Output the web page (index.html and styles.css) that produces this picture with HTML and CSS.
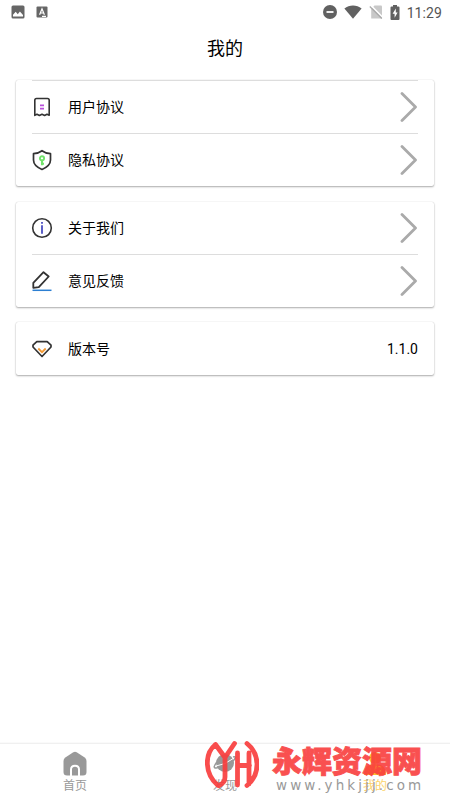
FILE: index.html
```html
<!DOCTYPE html>
<html lang="zh-CN">
<head>
<meta charset="utf-8">
<title>我的</title>
<link rel="stylesheet" href="styles.css">
</head>
<body>
<div class="app">
  <div class="status">
    <div class="status-group left">
      <svg width="14" height="14" viewBox="0 0 14 14"><rect x=".5" y=".5" width="13" height="13" rx="1.5" fill="#666"/><path d="M2 11.5V9.8l2.7-3 2.1 2.4 2.1-2.6 3.1 3.5v1.4z" fill="#fff"/></svg>
      <svg width="12" height="12" viewBox="0 0 12 12"><rect x=".5" y=".5" width="11" height="11" rx="1" fill="#666"/><path d="M3.6 8.8 6 2.8l2.4 6M4.400 7h3.200M6 10.400h4" fill="none" stroke="#fff" stroke-width="1.200"/></svg>
    </div>
    <div class="status-group right">
      <svg width="14" height="14" viewBox="0 0 14 14"><circle cx="7" cy="7" r="7" fill="#616161"/><path d="M3.500 7h7" stroke="#fff" stroke-width="1.800"/></svg>
      <svg width="18" height="14" viewBox="0 0 18 14"><path d="M.4 3.400C5.200-.5 12.800-.5 17.600 3.400L9 13.800z" fill="#616161"/></svg>
      <svg width="14" height="14" viewBox="0 0 14 14"><path d="M5.500.5H12q1 0 1 1v12H2.200V4z" fill="#c8c8c8"/><path d="m1.500 0 13 13" stroke="#fff" stroke-width="1.500"/><path d="m.8 1.500 12 12" stroke="#aaa" stroke-width="1.200"/></svg>
      <svg width="10" height="15" viewBox="0 0 10 15"><path d="M3 0h4v1.500h1.500q1 0 1 1V14q0 1-1 1h-7q-1 0-1-1V2.500q0-1 1-1H3z" fill="#616161"/><path d="M5.800 3.500 2.600 8.700h2v4l3-5.300H5.800z" fill="#fff"/></svg>
      <span class="clock">11:29</span>
    </div>
  </div>
  <h1 class="title">我的</h1>
  <main class="cards">
    <section class="card">
      <div class="row ruled">
        <svg class="icon" viewBox="0 0 22 22" fill="none"><path d="M3.800 19.300V4.200q0-1.700 1.700-1.700h11q1.700 0 1.700 1.700v15.100l-2.200-1-2.400 1.200L11 18.300l-2.600 1.200L6 18.300z" stroke="#333" stroke-width="1.600" stroke-linejoin="round"/><path d="M9 9.300h4M9 12.700h4" stroke="#b950dc" stroke-width="1.700"/></svg>
        <span class="label">用户协议</span>
        <svg class="chevron" viewBox="0 0 18 30"><path d="m2 1.500 13.500 13.500L2 28.500"/></svg>
      </div>
      <div class="row ruled">
        <svg class="icon" viewBox="0 0 22 22" fill="none"><path d="M11 1.700Q14.500 4.300 19.500 4.700V11q0 5.800-8.500 9.500Q2.500 16.800 2.500 11V4.700Q7.500 4.300 11 1.700z" stroke="#333" stroke-width="1.700" stroke-linejoin="round"/><circle cx="11" cy="9.300" r="2.100" stroke="#72e36c" stroke-width="1.900"/><path d="M11 11v5.200M11 14.700h2" stroke="#72e36c" stroke-width="2.100"/></svg>
        <span class="label">隐私协议</span>
        <svg class="chevron" viewBox="0 0 18 30"><path d="m2 1.500 13.500 13.500L2 28.500"/></svg>
      </div>
    </section>
    <section class="card compact">
      <div class="row">
        <svg class="icon" viewBox="0 0 22 22" fill="none"><circle cx="11" cy="11" r="9.300" stroke="#333" stroke-width="1.600"/><path d="M11 8.300v8.500M11 5v1.700" stroke="#5b5fc7" stroke-width="2"/></svg>
        <span class="label">关于我们</span>
        <svg class="chevron" viewBox="0 0 18 30"><path d="m2 1.500 13.500 13.500L2 28.500"/></svg>
      </div>
      <div class="row ruled">
        <svg class="icon" viewBox="0 0 22 22" fill="none"><path d="M2.300 17.800v-5L12.500 2.200l5.200 4.300L7.800 17.200z" stroke="#333" stroke-width="1.800" stroke-linejoin="round"/><path d="M1.500 20.300h19" stroke="#2c7fd2" stroke-width="1.500"/></svg>
        <span class="label">意见反馈</span>
        <svg class="chevron" viewBox="0 0 18 30"><path d="m2 1.500 13.500 13.500L2 28.500"/></svg>
      </div>
    </section>
    <section class="card compact">
      <div class="row">
        <svg class="icon" viewBox="0 0 22 22" fill="none"><path d="M5.800 3.700h10.400l3.800 3.500v1.800L11 18.500 2 9V7.200z" stroke="#333" stroke-width="1.700" stroke-linejoin="round"/><path d="m7.300 10.500 3.700 3.700 3.700-3.700" stroke="#f39a35" stroke-width="1.800"/></svg>
        <span class="label">版本号</span>
        <span class="version">1.1.0</span>
      </div>
    </section>
  </main>
  <nav class="tabs">
    <div class="tab">
      <svg width="24" height="25" viewBox="0 0 24 25"><path d="M10.300 1.200q1.700-1.100 3.400 0l8 5.300q1.800 1.300 1.800 3.500v11q0 3.500-3.500 3.500H4Q.5 24.500.5 21V10q0-2.200 1.800-3.500z" fill="#999"/><path d="M8 25v-6.500q0-3.700 4-3.700t4 3.700V25" fill="none" stroke="#fff" stroke-width="2"/></svg>
      <span>首页</span>
    </div>
    <div class="tab">
      <svg width="24" height="25" viewBox="0 0 24 25"><circle cx="12" cy="12" r="9" fill="#999"/><path d="M4 11Q-1 17 3 17q10-1 18-8 3-4-1-3" fill="none" stroke="#999" stroke-width="1.500"/><path d="M3 15q9-1 18-8" fill="none" stroke="#fff" stroke-width="1"/></svg>
      <span>发现</span>
    </div>
    <div class="tab active">
      <svg width="24" height="25" viewBox="0 0 24 25"><circle cx="12" cy="7" r="6" fill="#fbc02d"/><path d="M1 24q0-11 11-11t11 11z" fill="#fbc02d"/></svg>
      <span>我的</span>
    </div>
  </nav>
  <div class="watermark">
    <svg class="mark" viewBox="0 0 54 49" fill="none"><path d="M10.500 4.500C-1 14-.5 34 13 45.500M10.500 4.500 20 17.500 29.500 3.500M20 17.500V37q0 6-6 8.500M32.500 13v32M32.500 25.500h12M44 13v31M42 3.500q10 8 10 21T42 45.500"/></svg>
    <div class="mark-text"><div class="mark-name">永辉资源网</div><div class="mark-url">www.yhkjjj.com</div></div>
  </div>
</div>
</body>
</html>
```
FILE: styles.css
```css
* { box-sizing: border-box; }
body { margin: 0; background: #fff; font-family: Roboto, "Noto Sans CJK SC", sans-serif; color: #111; }
.app { position: relative; width: 450px; height: 800px; display: flex; flex-direction: column; overflow: hidden; }
.status { height: 24px; padding: 0 8px 0 11px; display: flex; justify-content: space-between; align-items: center; }
.status-group { display: flex; align-items: center; }
.left { gap: 11px; }
.right { gap: 7px; }
.status svg { display: block; }
.clock { font-size: 14px; line-height: 24px; color: #555; font-weight: 400; padding-top: 2px; letter-spacing: .1px; }
.title { margin: 0; height: 56px; padding-bottom: 7px; font-size: 18px; line-height: 50px; font-weight: 400; text-align: center; color: #000; }
.cards { flex: 1; padding: 0 16px; display: flex; flex-direction: column; gap: 15.5px; }
.card { padding: 0 16px; border-radius: 2px; background: #fff; box-shadow: 0 1px 2px rgba(0,0,0,.32), 0 0 1px rgba(0,0,0,.2); }
.row { height: 53px; display: flex; align-items: center; }
.compact .row { height: 52.7px; }
.ruled { border-top: 1px solid #ddd; }
.icon { width: 22px; height: 22px; margin: 0 15px 0 -1px; }
.label { flex: 1; font-size: 14px; line-height: 20px; color: #000; }
.chevron { width: 18px; height: 30px; }
.chevron path { fill: none; stroke: #aaa; stroke-width: 2.8; stroke-linecap: round; stroke-linejoin: round; }
.version { font-size: 14px; color: #000; }
.tabs { height: 57px; display: flex; border-top: 1px solid #f0f0f0; box-shadow: 0 -1px 1px rgba(0,0,0,.02); }
.tab { flex: 1; padding-top: 8px; display: flex; flex-direction: column; align-items: center; font-size: 12px; line-height: 21px; color: #999; }
.tab svg { display: block; margin-top: -1px; }
.active { color: #fbd36a; }
.watermark { position: absolute; left: 205px; top: 740px; display: flex; }
.mark { width: 54px; height: 49px; margin-right: 13px; }
.mark path { stroke: #f93e3e; stroke-opacity: .92; stroke-width: 4.8; stroke-linecap: round; stroke-linejoin: round; }
.mark-name { font-size: 30px; line-height: 43px; font-weight: 900; color: #f93e3e; -webkit-text-stroke: .9px #f93e3e; opacity: .9; white-space: nowrap; }
.mark-url { margin: -7px 0 0 4px; font-family: "DejaVu Sans", sans-serif; font-size: 13.5px; line-height: 18px; letter-spacing: 3.1px; color: #999; white-space: nowrap; }
```
